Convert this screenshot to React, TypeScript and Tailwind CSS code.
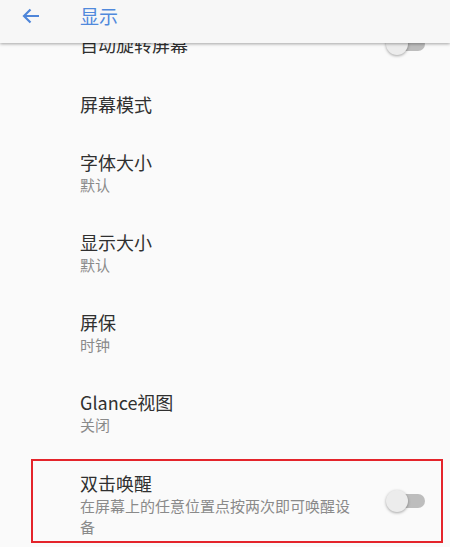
import type { ReactNode } from 'react';

const font = { fontFamily: '"Noto Sans CJK SC", "Noto Sans", sans-serif' };

function Toggle() {
  return (
    <div className="relative w-[39px] h-[22px] shrink-0">
      <div className="absolute right-0 top-[4px] w-[28px] h-[14px] rounded-full bg-[#bdbdbd]" />
      <div className="absolute left-0 top-0 w-[22px] h-[22px] rounded-full bg-[#ececec] shadow-[0_1px_3px_rgba(0,0,0,0.35)]" />
    </div>
  );
}

function Row({ title, sub, height, right }: { title: string; sub?: string; height: string; right?: ReactNode }) {
  return (
    <div className={`flex items-center pl-[80px] pr-[25px] ${height}`}>
      <div className="flex-1">
        <div className="text-[18px] leading-[24px] text-[#303030]">{title}</div>
        {sub && <div className="text-[15px] leading-[22px] text-[#8a8a8a]">{sub}</div>}
      </div>
      {right}
    </div>
  );
}

export default function App() {
  return (
    <div className="w-[450px] h-[547px] overflow-hidden bg-[#fafafa]" style={font}>
      <div className="relative z-10 h-[43px] bg-[#f7f7f7] shadow-[0_1px_3px_rgba(0,0,0,0.35)]">
        <div className="flex items-center h-[31px]">
          <svg className="ml-[22px] w-[18px] h-[16px]" viewBox="0 0 18 16" fill="none" stroke="#4f86d9" strokeWidth="2.2">
            <path d="M17 8H2M8.5 1.5 2 8l6.5 6.5" />
          </svg>
          <div className="ml-[40px] text-[19px] leading-none text-[#5089dc]">显示</div>
        </div>
      </div>

      <div className="-mt-[29px]">
        <Row title="自动旋转屏幕" height="h-[60px]" right={<Toggle />} />
        <Row title="屏幕模式" height="h-[59px]" />
        <Row title="字体大小" sub="默认" height="h-[80px]" />
        <Row title="显示大小" sub="默认" height="h-[80px]" />
        <Row title="屏保" sub="时钟" height="h-[80px]" />
        <Row title="Glance视图" sub="关闭" height="h-[80px]" />

        <div className="pt-[6px]">
          <div className="ml-[31px] w-[412px] h-[84px] border-2 border-[#e4242b] flex items-center pl-[47px] pr-[16px]">
            <div className="flex-1 pt-[6px]">
              <div className="text-[18px] leading-[24px] text-[#303030]">双击唤醒</div>
              <div className="w-[280px] text-[15px] leading-[21px] text-[#8a8a8a]">
                在屏幕上的任意位置点按两次即可唤醒设备
              </div>
            </div>
            <Toggle />
          </div>
        </div>
      </div>
    </div>
  );
}
